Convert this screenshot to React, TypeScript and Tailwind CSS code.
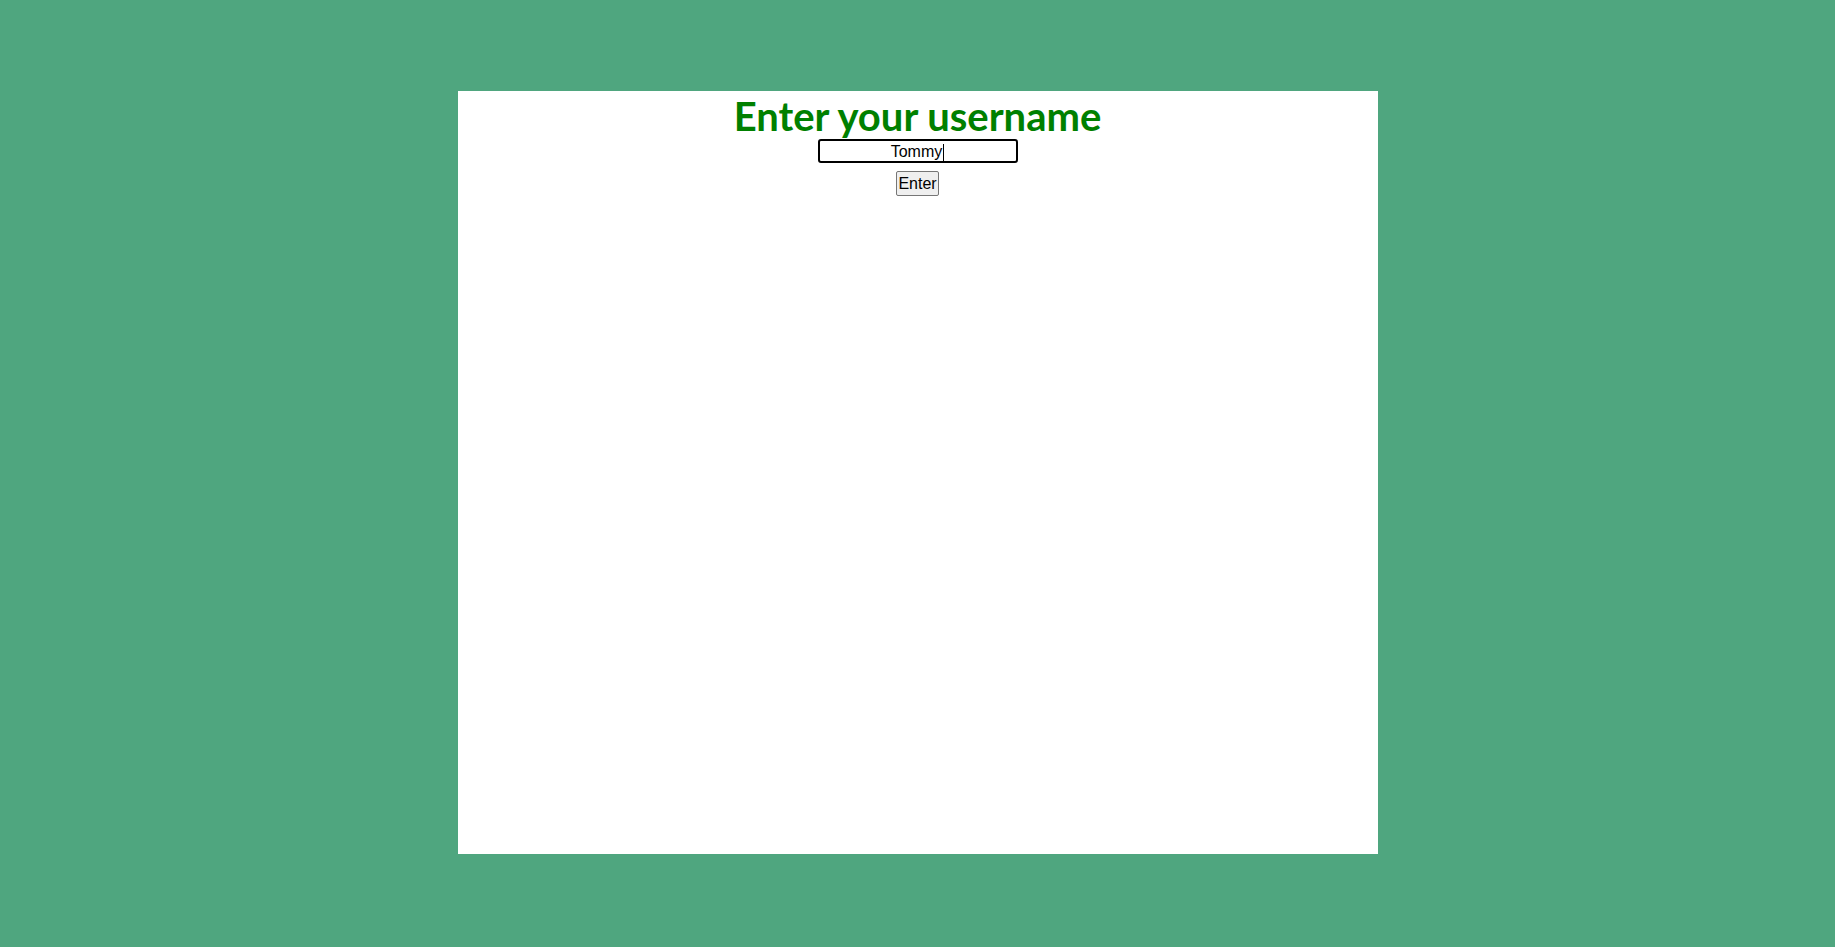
import React from "react";

export default function App() {
  return (
    <div className="w-full h-[947px] bg-[#4fa67f] pt-[91px]">
      <div className="mx-auto w-[920px] h-[763px] bg-white flex flex-col items-center">
        <h1
          className="text-[40px] leading-[48px] font-bold text-[#008000] pt-[1px] h-[48px]"
          style={{ fontFamily: "Lato, 'Noto Sans', sans-serif" }}
        >
          Enter your username
        </h1>
        <div
          className="w-[200px] h-[24px] border-2 border-black rounded-[3px] flex items-center justify-center text-[16px] text-black bg-white"
          style={{ fontFamily: "'Liberation Sans', Arial, sans-serif" }}
        >
          <span className="mt-[1px]">Tommy</span>
          <span className="inline-block w-px h-[17px] bg-black ml-[1px] mt-[3px]" />
        </div>
        <button
          className="mt-[8px] h-[25px] w-[43px] bg-[#efefef] border border-[#767676] rounded-[2px] text-[16px] leading-none text-black flex items-center justify-center"
          style={{ fontFamily: "'Liberation Sans', Arial, sans-serif" }}
        >
          Enter
        </button>
      </div>
    </div>
  );
}
